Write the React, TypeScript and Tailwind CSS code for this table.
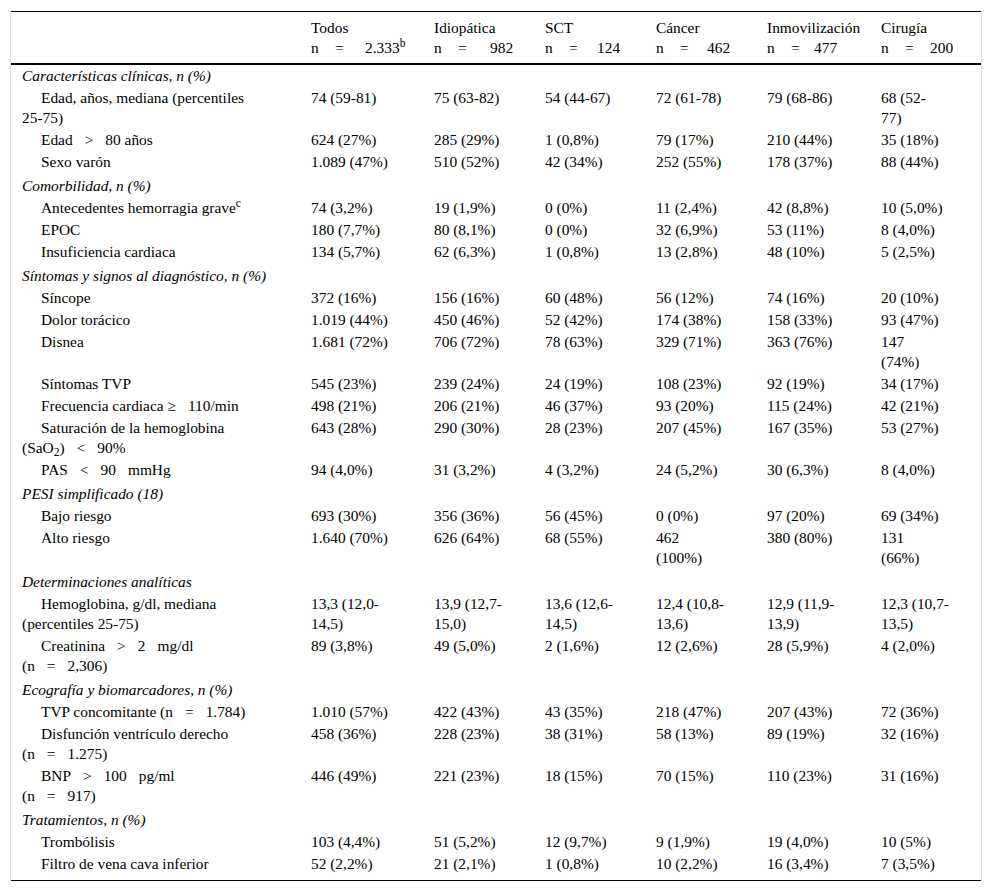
import React from "react";

const S = () => <span className="inline-block w-[12px]" />;

type Row =
  | { kind: "section"; label: string }
  | { kind: "item"; label: React.ReactNode; values: string[] };

const rows: Row[] = [
  { kind: "section", label: "Características clínicas, n (%)" },
  {
    kind: "item",
    label: (
      <>
        Edad, años, mediana (percentiles
        <br />
        25-75)
      </>
    ),
    values: ["74 (59-81)", "75 (63-82)", "54 (44-67)", "72 (61-78)", "79 (68-86)", "68 (52-\n77)"],
  },
  {
    kind: "item",
    label: (
      <>
        Edad<S />&gt;<S />80 años
      </>
    ),
    values: ["624 (27%)", "285 (29%)", "1 (0,8%)", "79 (17%)", "210 (44%)", "35 (18%)"],
  },
  {
    kind: "item",
    label: "Sexo varón",
    values: ["1.089 (47%)", "510 (52%)", "42 (34%)", "252 (55%)", "178 (37%)", "88 (44%)"],
  },
  { kind: "section", label: "Comorbilidad, n (%)" },
  {
    kind: "item",
    label: (
      <>
        Antecedentes hemorragia grave<sup>c</sup>
      </>
    ),
    values: ["74 (3,2%)", "19 (1,9%)", "0 (0%)", "11 (2,4%)", "42 (8,8%)", "10 (5,0%)"],
  },
  {
    kind: "item",
    label: "EPOC",
    values: ["180 (7,7%)", "80 (8,1%)", "0 (0%)", "32 (6,9%)", "53 (11%)", "8 (4,0%)"],
  },
  {
    kind: "item",
    label: "Insuficiencia cardiaca",
    values: ["134 (5,7%)", "62 (6,3%)", "1 (0,8%)", "13 (2,8%)", "48 (10%)", "5 (2,5%)"],
  },
  { kind: "section", label: "Síntomas y signos al diagnóstico, n (%)" },
  {
    kind: "item",
    label: "Síncope",
    values: ["372 (16%)", "156 (16%)", "60 (48%)", "56 (12%)", "74 (16%)", "20 (10%)"],
  },
  {
    kind: "item",
    label: "Dolor torácico",
    values: ["1.019 (44%)", "450 (46%)", "52 (42%)", "174 (38%)", "158 (33%)", "93 (47%)"],
  },
  {
    kind: "item",
    label: "Disnea",
    values: ["1.681 (72%)", "706 (72%)", "78 (63%)", "329 (71%)", "363 (76%)", "147\n(74%)"],
  },
  {
    kind: "item",
    label: "Síntomas TVP",
    values: ["545 (23%)", "239 (24%)", "24 (19%)", "108 (23%)", "92 (19%)", "34 (17%)"],
  },
  {
    kind: "item",
    label: (
      <>
        Frecuencia cardiaca ≥<S />110/min
      </>
    ),
    values: ["498 (21%)", "206 (21%)", "46 (37%)", "93 (20%)", "115 (24%)", "42 (21%)"],
  },
  {
    kind: "item",
    label: (
      <>
        Saturación de la hemoglobina
        <br />
        (SaO<sub>2</sub>)<S />&lt;<S />90%
      </>
    ),
    values: ["643 (28%)", "290 (30%)", "28 (23%)", "207 (45%)", "167 (35%)", "53 (27%)"],
  },
  {
    kind: "item",
    label: (
      <>
        PAS<S />&lt;<S />90<S />mmHg
      </>
    ),
    values: ["94 (4,0%)", "31 (3,2%)", "4 (3,2%)", "24 (5,2%)", "30 (6,3%)", "8 (4,0%)"],
  },
  { kind: "section", label: "PESI simplificado (18)" },
  {
    kind: "item",
    label: "Bajo riesgo",
    values: ["693 (30%)", "356 (36%)", "56 (45%)", "0 (0%)", "97 (20%)", "69 (34%)"],
  },
  {
    kind: "item",
    label: "Alto riesgo",
    values: ["1.640 (70%)", "626 (64%)", "68 (55%)", "462\n(100%)", "380 (80%)", "131\n(66%)"],
  },
  { kind: "section", label: "Determinaciones analíticas" },
  {
    kind: "item",
    label: (
      <>
        Hemoglobina, g/dl, mediana
        <br />
        (percentiles 25-75)
      </>
    ),
    values: [
      "13,3 (12,0-\n14,5)",
      "13,9 (12,7-\n15,0)",
      "13,6 (12,6-\n14,5)",
      "12,4 (10,8-\n13,6)",
      "12,9 (11,9-\n13,9)",
      "12,3 (10,7-\n13,5)",
    ],
  },
  {
    kind: "item",
    label: (
      <>
        Creatinina<S />&gt;<S />2<S />mg/dl
        <br />
        (n<S />=<S />2,306)
      </>
    ),
    values: ["89 (3,8%)", "49 (5,0%)", "2 (1,6%)", "12 (2,6%)", "28 (5,9%)", "4 (2,0%)"],
  },
  { kind: "section", label: "Ecografía y biomarcadores, n (%)" },
  {
    kind: "item",
    label: (
      <>
        TVP concomitante (n<S />=<S />1.784)
      </>
    ),
    values: ["1.010 (57%)", "422 (43%)", "43 (35%)", "218 (47%)", "207 (43%)", "72 (36%)"],
  },
  {
    kind: "item",
    label: (
      <>
        Disfunción ventrículo derecho
        <br />
        (n<S />=<S />1.275)
      </>
    ),
    values: ["458 (36%)", "228 (23%)", "38 (31%)", "58 (13%)", "89 (19%)", "32 (16%)"],
  },
  {
    kind: "item",
    label: (
      <>
        BNP<S />&gt;<S />100<S />pg/ml
        <br />
        (n<S />=<S />917)
      </>
    ),
    values: ["446 (49%)", "221 (23%)", "18 (15%)", "70 (15%)", "110 (23%)", "31 (16%)"],
  },
  { kind: "section", label: "Tratamientos, n (%)" },
  {
    kind: "item",
    label: "Trombólisis",
    values: ["103 (4,4%)", "51 (5,2%)", "12 (9,7%)", "9 (1,9%)", "19 (4,0%)", "10 (5%)"],
  },
  {
    kind: "item",
    label: "Filtro de vena cava inferior",
    values: ["52 (2,2%)", "21 (2,1%)", "1 (0,8%)", "10 (2,2%)", "16 (3,4%)", "7 (3,5%)"],
  },
];

function Multi({ text }: { text: string }) {
  const parts = text.split("\n");
  return (
    <>
      {parts.map((p, i) => (
        <React.Fragment key={i}>
          {i > 0 && <br />}
          {p}
        </React.Fragment>
      ))}
    </>
  );
}

function HeaderCell({
  title,
  num,
  sup,
  eqClass,
}: {
  title: string;
  num: string;
  sup?: string;
  eqClass: string;
}) {
  return (
    <th className="pl-[11px] pt-[6px] pb-[5px] text-left align-top font-normal border-t border-b-2 border-black">
      {title}
      <br />
      <span className="inline-block w-[24px]">n</span>
      <span className={eqClass}>=</span>
      {num}
      {sup && <sup>{sup}</sup>}
    </th>
  );
}

export default function App() {
  return (
    <div className="pt-[11px] pl-[10px] bg-white min-h-screen font-['Liberation_Serif','Times_New_Roman',serif] text-[15.4px] leading-[20px] text-black">
      <div className="w-[972px] border-x border-[#e3e3e3]">
        <table className="w-[970px] table-fixed border-collapse">
          <colgroup>
            <col className="w-[289px]" />
            <col className="w-[123px]" />
            <col className="w-[111px]" />
            <col className="w-[111px]" />
            <col className="w-[111px]" />
            <col className="w-[114px]" />
            <col className="w-[111px]" />
          </colgroup>
          <thead>
            <tr>
              <th className="border-t border-b-2 border-black" />
              <HeaderCell title="Todos" num="2.333" sup="b" eqClass="inline-block w-[30px]" />
              <HeaderCell title="Idiopática" num="982" eqClass="inline-block w-[32px]" />
              <HeaderCell title="SCT" num="124" eqClass="inline-block w-[28px]" />
              <HeaderCell title="Cáncer" num="462" eqClass="inline-block w-[27px]" />
              <HeaderCell title="Inmovilización" num="477" eqClass="inline-block w-[23px]" />
              <HeaderCell title="Cirugía" num="200" eqClass="inline-block w-[25px]" />
            </tr>
          </thead>
          <tbody>
            {rows.map((r, i) => {
              const last = i === rows.length - 1;
              if (r.kind === "section") {
                const pt = i === 0 ? "pt-[1px]" : "pt-[3px]";
                return (
                  <tr key={i}>
                    <td colSpan={7} className={`pl-[11px] ${pt} pb-[1px] italic whitespace-nowrap align-top`}>
                      {r.label}
                    </td>
                  </tr>
                );
              }
              const cellPad = last ? "pt-[1px] pb-[6px] border-b border-black" : "py-[1px]";
              return (
                <tr key={i}>
                  <td className={`pl-[11px] indent-[19px] whitespace-nowrap align-top ${cellPad}`}>{r.label}</td>
                  {r.values.map((v, j) => (
                    <td key={j} className={`pl-[11px] whitespace-nowrap align-top ${cellPad}`}>
                      <Multi text={v} />
                    </td>
                  ))}
                </tr>
              );
            })}
          </tbody>
        </table>
      </div>
    </div>
  );
}
